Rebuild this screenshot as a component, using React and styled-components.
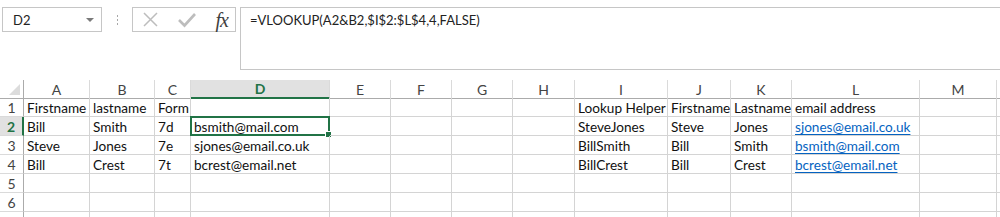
import React from 'react';
import styled, { createGlobalStyle } from 'styled-components';

const Global = createGlobalStyle`
  html, body { margin: 0; padding: 0; background: #fff; }
  body { font-family: Lato, "Open Sans", sans-serif; overflow: hidden; width: 1000px; height: 217px; }
`;

const COLS = [
  { key: 'A', w: 66 }, { key: 'B', w: 65 }, { key: 'C', w: 36 }, { key: 'D', w: 139 },
  { key: 'E', w: 61 }, { key: 'F', w: 61 }, { key: 'G', w: 61 }, { key: 'H', w: 62 },
  { key: 'I', w: 93 }, { key: 'J', w: 63 }, { key: 'K', w: 61 }, { key: 'L', w: 128 },
  { key: 'M', w: 77 }, { key: '', w: 100 },
];
const template = '24px ' + COLS.map(c => c.w + 'px').join(' ');

const ROWS = [
  { A: 'Firstname', B: 'lastname', C: 'Form', I: 'Lookup Helper', J: 'Firstname', K: 'Lastname', L: 'email address' },
  { A: 'Bill', B: 'Smith', C: '7d', D: 'bsmith@mail.com', I: 'SteveJones', J: 'Steve', K: 'Jones', L: 'sjones@email.co.uk', link: true },
  { A: 'Steve', B: 'Jones', C: '7e', D: 'sjones@email.co.uk', I: 'BillSmith', J: 'Bill', K: 'Smith', L: 'bsmith@mail.com', link: true },
  { A: 'Bill', B: 'Crest', C: '7t', D: 'bcrest@email.net', I: 'BillCrest', J: 'Bill', K: 'Crest', L: 'bcrest@email.net', link: true },
  {}, {}, { hidden: true },
];

const Window = styled.div`
  width: 1000px;
  height: 217px;
  overflow: hidden;
  display: flex;
  flex-direction: column;
`;

const TopBar = styled.div`
  display: flex;
  align-items: flex-start;
  padding: 7px 0 0 2px;
  height: 63px;
`;

const NameBox = styled.div`
  box-sizing: border-box;
  width: 100px;
  height: 25px;
  border: 1px solid #c6c6c6;
  display: flex;
  align-items: center;
  justify-content: space-between;
  padding: 0 7px 0 10px;
  font-size: 13px;
  color: #222;
`;

const Caret = styled.span`
  width: 0;
  height: 0;
  border-left: 4px solid transparent;
  border-right: 4px solid transparent;
  border-top: 4px solid #7a7a7a;
`;

const Dots = styled.div`
  width: 30px;
  height: 25px;
  display: flex;
  flex-direction: column;
  align-items: center;
  justify-content: center;
  gap: 2px;
  span { width: 1px; height: 2px; background: #a8a8a8; }
`;

const FxBox = styled.div`
  box-sizing: border-box;
  width: 104px;
  height: 25px;
  border: 1px solid #c6c6c6;
  display: flex;
  align-items: center;
  justify-content: space-between;
  padding: 0 7px 0 9px;
  margin-right: 4px;
`;

const Fx = styled.span`
  font-family: "Liberation Serif", serif;
  font-style: italic;
  font-size: 20px;
  color: #3f3f3f;
  letter-spacing: -1px;
  line-height: 1;
`;

const FormulaBox = styled.div`
  box-sizing: border-box;
  flex: 1;
  height: 63px;
  border: 1px solid #c6c6c6;
  border-right: none;
  padding: 4px 9px;
  font-size: 13px;
  color: #222;
`;

const Sheet = styled.div`
  margin-top: 10px;
  display: flex;
  flex-direction: column;
`;

const Row = styled.div`
  display: grid;
  grid-template-columns: ${template};
  height: ${p => (p.$head ? 18 : 19)}px;
`;

const Corner = styled.div`
  position: relative;
  box-sizing: border-box;
  border-right: 1px solid #ababab;
  border-bottom: 1px solid #ababab;
  &::after {
    content: '';
    position: absolute;
    right: 3px;
    bottom: 3px;
    border-left: 11px solid transparent;
    border-bottom: 11px solid #dcdcdc;
  }
`;

const ColHead = styled.div`
  box-sizing: border-box;
  border-right: 1px solid #dadada;
  border-bottom: ${p => (p.$sel ? '2px solid #217346' : '1px solid #ababab')};
  background: ${p => (p.$sel ? '#e1e1e1' : '#fff')};
  color: ${p => (p.$sel ? '#217346' : '#444')};
  font-weight: ${p => (p.$sel ? 700 : 400)};
  font-size: 14px;
  display: flex;
  align-items: center;
  justify-content: center;
`;

const RowHead = styled.div`
  box-sizing: border-box;
  border-right: ${p => (p.$sel ? '2px solid #217346' : '1px solid #ababab')};
  border-bottom: 1px solid #dadada;
  background: ${p => (p.$sel ? '#e1e1e1' : '#fff')};
  color: ${p => (p.$sel ? '#217346' : '#444')};
  font-weight: ${p => (p.$sel ? 700 : 400)};
  font-size: 14px;
  padding-top: 1px;
  display: flex;
  align-items: center;
  justify-content: center;
`;

const Cell = styled.div`
  position: relative;
  box-sizing: border-box;
  border-right: 1px solid #d4d4d4;
  border-bottom: 1px solid #d4d4d4;
  padding: 2px 3px 0;
  font-size: 13.6px;
  color: #111;
  display: flex;
  align-items: center;
  white-space: nowrap;
`;

const Link = styled.span`
  color: #0563c1;
  text-decoration: underline;
  text-underline-offset: 2px;
`;

const Selection = styled.div`
  position: absolute;
  left: -1px;
  top: -1px;
  right: -1px;
  bottom: -1px;
  border: 2px solid #217346;
  pointer-events: none;
  &::after {
    content: '';
    position: absolute;
    right: -4px;
    bottom: -4px;
    width: 5px;
    height: 5px;
    background: #217346;
    border: 1px solid #fff;
  }
`;

function Cancel() {
  return (
    <svg width="17" height="17" viewBox="0 0 17 17">
      <path d="M2 2 L15 15 M15 2 L2 15" stroke="#bdbdbd" strokeWidth="1.5" fill="none" />
    </svg>
  );
}

function Enter() {
  return (
    <svg width="20" height="16" viewBox="0 0 20 16">
      <path d="M2 8 L7.5 13.5 L18 2" stroke="#bdbdbd" strokeWidth="2.6" fill="none" />
    </svg>
  );
}

export default function App() {
  return (
    <Window>
      <Global />
      <TopBar>
        <NameBox>D2<Caret /></NameBox>
        <Dots><span /><span /><span /></Dots>
        <FxBox>
          <Cancel />
          <Enter />
          <Fx>fx</Fx>
        </FxBox>
        <FormulaBox>=VLOOKUP(A2&amp;B2,$I$2:$L$4,4,FALSE)</FormulaBox>
      </TopBar>
      <Sheet>
        <Row $head>
          <Corner />
          {COLS.map((c, k) => (
            <ColHead key={k} $sel={c.key === 'D'}>{c.key}</ColHead>
          ))}
        </Row>
        {ROWS.map((r, i) => (
          <Row key={i}>
            <RowHead $sel={i === 1}>{r.hidden ? '' : i + 1}</RowHead>
            {COLS.map((c, k) => (
              <Cell key={k}>
                {c.key === 'L' && r.link ? <Link>{r[c.key]}</Link> : r[c.key]}
                {i === 1 && c.key === 'D' && <Selection />}
              </Cell>
            ))}
          </Row>
        ))}
      </Sheet>
    </Window>
  );
}
